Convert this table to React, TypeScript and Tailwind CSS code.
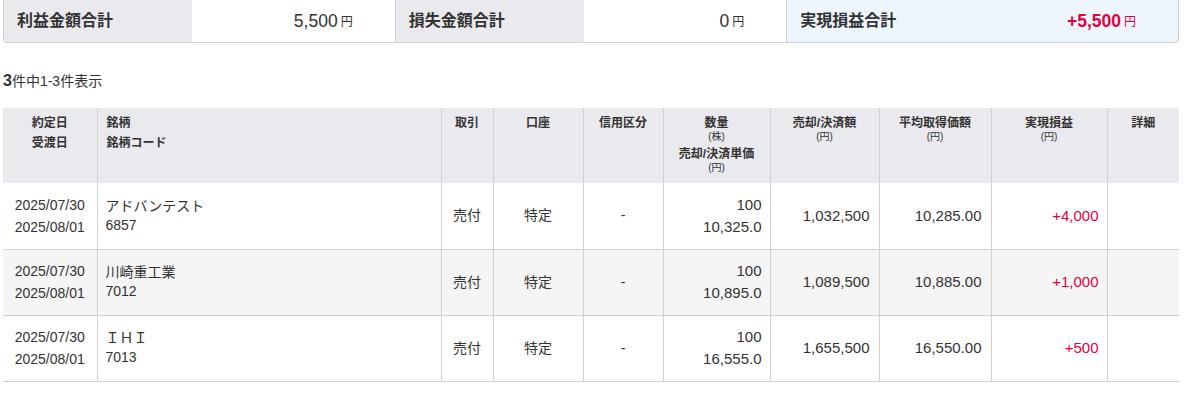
import React from "react";

type Row = {
  trade: string;
  settle: string;
  name: string;
  code: string;
  qty: string;
  price: string;
  amount: string;
  avg: string;
  pl: string;
};

const rows: Row[] = [
  { trade: "2025/07/30", settle: "2025/08/01", name: "アドバンテスト", code: "6857", qty: "100", price: "10,325.0", amount: "1,032,500", avg: "10,285.00", pl: "+4,000" },
  { trade: "2025/07/30", settle: "2025/08/01", name: "川崎重工業", code: "7012", qty: "100", price: "10,895.0", amount: "1,089,500", avg: "10,885.00", pl: "+1,000" },
  { trade: "2025/07/30", settle: "2025/08/01", name: "ＩＨＩ", code: "7013", qty: "100", price: "16,555.0", amount: "1,655,500", avg: "16,550.00", pl: "+500" },
];

const widths = [94, 344, 52, 90, 80, 107, 109, 112, 116, 72];

function SummaryItem({ label, value, plus, tinted }: { label: string; value: string; plus?: boolean; tinted?: boolean }) {
  return (
    <div className={`flex h-[42px] flex-1 ${tinted ? "bg-[#edf5fd]" : ""}`}>
      <div className={`flex w-[188px] items-center pl-[13px] text-[16px] font-bold ${tinted ? "" : "bg-[#e9e9ee]"}`}>{label}</div>
      <div className="flex flex-1 items-center justify-end gap-[3px] pr-[42px]">
        <span className={`text-[17.5px] ${plus ? "font-bold text-[#e5003f]" : ""}`}>{value}</span>
        <span className={`pt-[2px] text-[12px] ${plus ? "text-[#e5003f]" : ""}`}>円</span>
      </div>
    </div>
  );
}

function Unit({ children }: { children: React.ReactNode }) {
  return <div className="text-[10px] font-normal leading-[12px]">{children}</div>;
}

export default function App() {
  return (
    <div
      className="h-[397px] w-[1188px] bg-white pl-[3px] text-[#333]"
      style={{ fontFamily: '"Liberation Sans", "Noto Sans CJK JP", sans-serif' }}
    >
      <div className="flex w-[1176px] overflow-hidden rounded-b-[4px] border-x border-b border-[#cfcfd4]">
        <SummaryItem label="利益金額合計" value="5,500" />
        <div className="w-px bg-[#cfcfd4]" />
        <SummaryItem label="損失金額合計" value="0" />
        <div className="w-px bg-[#cfcfd4]" />
        <SummaryItem label="実現損益合計" value="+5,500" plus tinted />
      </div>

      <div className="mt-[26px] flex items-baseline text-[14px]">
        <span className="text-[16px] font-bold">3</span>
        <span>件中1-3件表示</span>
      </div>

      <table className="mt-[15px] w-[1176px] table-fixed border-collapse">
        <colgroup>
          {widths.map((w, i) => (
            <col key={i} style={{ width: w }} />
          ))}
        </colgroup>
        <thead>
          <tr className="h-[75px] bg-[#e9e9ee] align-top text-[12px] font-bold">
            <th className="pt-[5px] text-center leading-[20px]">
              <div>約定日</div>
              <div>受渡日</div>
            </th>
            <th className="border-l border-[#d2d2d6] pl-[9px] pt-[5px] text-left leading-[20px]">
              <div>銘柄</div>
              <div>銘柄コード</div>
            </th>
            <th className="border-l border-[#d2d2d6] pt-[5px] leading-[20px]">取引</th>
            <th className="border-l border-[#d2d2d6] pt-[5px] leading-[20px]">口座</th>
            <th className="border-l border-[#d2d2d6] pt-[5px] leading-[20px]">信用区分</th>
            <th className="border-l border-[#d2d2d6] pt-[7px] leading-[16px]">
              <div>数量</div>
              <Unit>(株)</Unit>
              <div className="mt-[3px]">売却/決済単価</div>
              <Unit>(円)</Unit>
            </th>
            <th className="border-l border-[#d2d2d6] pt-[7px] leading-[16px]">
              <div>売却/決済額</div>
              <Unit>(円)</Unit>
            </th>
            <th className="border-l border-[#d2d2d6] pt-[7px] leading-[16px]">
              <div>平均取得価額</div>
              <Unit>(円)</Unit>
            </th>
            <th className="border-l border-[#d2d2d6] pt-[7px] leading-[16px]">
              <div>実現損益</div>
              <Unit>(円)</Unit>
            </th>
            <th className="border-l border-[#d2d2d6] pt-[5px] leading-[20px]">詳細</th>
          </tr>
        </thead>
        <tbody className="text-[14px]">
          {rows.map((r, i) => (
            <tr key={r.code} className={`h-[66px] border-b border-[#d0d0d0] ${i === 1 ? "bg-[#f5f5f5]" : ""}`}>
              <td className="text-center leading-[22px]">
                <div>{r.trade}</div>
                <div>{r.settle}</div>
              </td>
              <td className="border-l border-[#d0d0d0] pl-[8px] leading-[19px]">
                <div>{r.name}</div>
                <div>{r.code}</div>
              </td>
              <td className="border-l border-[#d0d0d0] text-center">売付</td>
              <td className="border-l border-[#d0d0d0] text-center">特定</td>
              <td className="border-l border-[#d0d0d0] text-center">-</td>
              <td className="border-l border-[#d0d0d0] pr-[8px] text-right text-[15px] leading-[22px]">
                <div>{r.qty}</div>
                <div>{r.price}</div>
              </td>
              <td className="border-l border-[#d0d0d0] pr-[9px] text-right text-[15px]">{r.amount}</td>
              <td className="border-l border-[#d0d0d0] pr-[9px] text-right text-[15px]">{r.avg}</td>
              <td className="border-l border-[#d0d0d0] pr-[8px] text-right text-[15px] text-[#e5003f]">{r.pl}</td>
              <td className="border-l border-[#d0d0d0]"></td>
            </tr>
          ))}
        </tbody>
      </table>
    </div>
  );
}
